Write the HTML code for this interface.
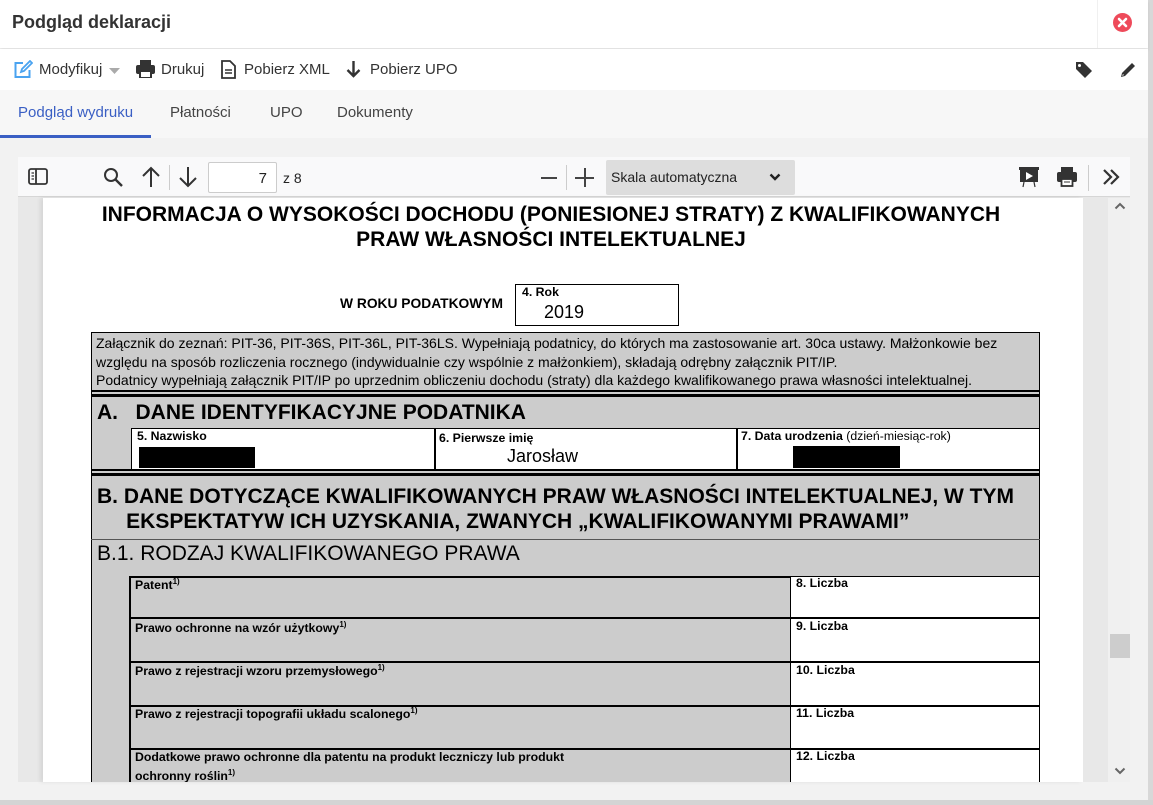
<!DOCTYPE html>
<html><head><meta charset="utf-8"><style>
*{box-sizing:border-box;margin:0;padding:0}
html,body{width:1153px;height:805px;overflow:hidden}
body{background:#f2f2f2;font-family:"Liberation Sans",sans-serif;position:relative}
.a{position:absolute}
.t{font-family:"Liberation Sans",sans-serif;color:#000;white-space:nowrap}
.b{font-weight:bold}
.gray{background:#cccccc}
.l{font-size:12.3px}
</style></head><body>
<div class="a" style="left:1148px;top:0;width:5px;height:805px;background:#d8d8d8"></div>
<div class="a" style="left:0;top:800px;width:1153px;height:5px;background:#d4d4d4"></div>
<div class="a" style="left:0;top:0;width:1148px;height:48px;background:#fff;box-shadow:0 2px 3px rgba(0,0,0,.08)"></div>
<div class="a" style="left:1097px;top:0;width:1px;height:48px;background:#f0f0f0"></div>
<div class="a t b" style="left:12px;top:12px;font-size:18px;color:#333">Podgląd deklaracji</div>
<svg class="a" style="left:1113px;top:13px" width="19" height="19" viewBox="0 0 19 19"><circle cx="9.5" cy="9.5" r="9.5" fill="#ee4a5a"/><path d="M6 6L13 13M13 6L6 13" stroke="#fff" stroke-width="2.6" stroke-linecap="round"/></svg>
<div class="a" style="left:0;top:49px;width:1148px;height:41px;background:#fff"></div>
<svg class="a" style="left:13px;top:60px" width="20" height="19" viewBox="0 0 20 19"><path d="M10 3H2.5v14h14V10" fill="none" stroke="#4aa3f0" stroke-width="2"/><path d="M8 12l1-3 8-8 2 2-8 8z" fill="none" stroke="#4aa3f0" stroke-width="1.8"/></svg>
<div class="a t" style="left:39px;top:61px;font-size:15px;color:#333">Modyfikuj</div>
<svg class="a" style="left:109px;top:68px" width="11" height="6"><path d="M0 0h11L5.5 6z" fill="#aaa"/></svg>
<svg class="a" style="left:136px;top:60px" width="19" height="18" viewBox="0 0 19 18"><rect x="4" y="0" width="11" height="5" fill="#333"/><rect x="0" y="5" width="19" height="9" rx="2" fill="#333"/><rect x="4" y="11" width="11" height="7" fill="#fff" stroke="#333" stroke-width="2"/></svg>
<div class="a t" style="left:161px;top:61px;font-size:15px;color:#333">Drukuj</div>
<svg class="a" style="left:221px;top:60px" width="15" height="19" viewBox="0 0 15 19"><path d="M1 1h8l5 5v12H1z" fill="none" stroke="#333" stroke-width="1.8"/><path d="M4 10h7M4 13h7" stroke="#333" stroke-width="1.6"/></svg>
<div class="a t" style="left:244px;top:61px;font-size:15px;color:#333">Pobierz XML</div>
<svg class="a" style="left:346px;top:60px" width="15" height="18" viewBox="0 0 15 18"><path d="M7.5 1v15M1.5 10l6 6 6-6" fill="none" stroke="#333" stroke-width="2.4"/></svg>
<div class="a t" style="left:370px;top:61px;font-size:15px;color:#333">Pobierz UPO</div>
<svg class="a" style="left:1075px;top:61px" width="18" height="18" viewBox="0 0 18 18"><path d="M1 1h7l9 9-7 7-9-9z" fill="#333"/><circle cx="4.5" cy="4.5" r="1.5" fill="#fff"/></svg>
<svg class="a" style="left:1120px;top:61px" width="17" height="17" viewBox="0 0 17 17"><path d="M1 16l1-4L12 2l3 3L5 15z" fill="#333"/><path d="M2.5 14.5l1-1" stroke="#fff"/></svg>
<div class="a" style="left:0;top:90px;width:1148px;height:48px;background:#f7f7f7"></div>
<div class="a t" style="left:18px;top:104px;font-size:15px;color:#3a5fc4">Podgląd wydruku</div>
<div class="a" style="left:0;top:135px;width:151px;height:3px;background:#3a5fc4"></div>
<div class="a t" style="left:170px;top:104px;font-size:15px;color:#444">Płatności</div>
<div class="a t" style="left:270px;top:104px;font-size:15px;color:#444">UPO</div>
<div class="a t" style="left:337px;top:104px;font-size:15px;color:#444">Dokumenty</div>
<div class="a" style="left:18px;top:157px;width:1112px;height:625px;background:#e8e8e8"></div>
<div class="a" style="left:18px;top:157px;width:1112px;height:40px;background:#f9f9fa;border-bottom:1px solid #d6d6d6"></div>
<svg class="a" style="left:28px;top:168px" width="20" height="17" viewBox="0 0 20 17"><rect x="1" y="1" width="18" height="15" rx="2" fill="none" stroke="#333" stroke-width="1.8"/><path d="M8 1v15" stroke="#333" stroke-width="1.8"/><path d="M3.5 5h2.5M3.5 8h2.5M3.5 11h2.5" stroke="#333" stroke-width="1.2"/></svg>
<svg class="a" style="left:103px;top:167px" width="20" height="20" viewBox="0 0 20 20"><circle cx="8" cy="8" r="6" fill="none" stroke="#333" stroke-width="2"/><path d="M12.5 12.5L19 19" stroke="#333" stroke-width="2.4"/></svg>
<svg class="a" style="left:141px;top:166px" width="20" height="22" viewBox="0 0 20 22"><path d="M10 21V2M2 10l8-8 8 8" fill="none" stroke="#333" stroke-width="2"/></svg>
<div class="a" style="left:169px;top:165px;width:1px;height:25px;background:#ccc"></div>
<svg class="a" style="left:178px;top:166px" width="20" height="22" viewBox="0 0 20 22"><path d="M10 1v19M2 12l8 8 8-8" fill="none" stroke="#333" stroke-width="2"/></svg>
<div class="a t" style="left:208px;top:162px;width:69px;height:31px;border:1px solid #ccc;border-radius:2px;background:#fff;text-align:right;padding:7px 9px 0 0;font-size:15px;color:#222">7</div>
<div class="a t" style="left:283px;top:170px;font-size:14px;color:#222">z 8</div>
<div class="a" style="left:541px;top:177px;width:16px;height:2px;background:#444"></div>
<div class="a" style="left:566px;top:165px;width:1px;height:25px;background:#ccc"></div>
<div class="a" style="left:575px;top:177px;width:19px;height:2px;background:#444"></div>
<div class="a" style="left:584px;top:168px;width:2px;height:19px;background:#444"></div>
<div class="a" style="left:606px;top:160px;width:189px;height:35px;background:#ddd;border-radius:2px"></div>
<div class="a t" style="left:611px;top:169px;font-size:14px;color:#222">Skala automatyczna</div>
<svg class="a" style="left:769px;top:173px" width="12" height="8" viewBox="0 0 12 8"><path d="M1.5 1.5l4.5 4.5 4.5-4.5" fill="none" stroke="#222" stroke-width="2.4"/></svg>
<svg class="a" style="left:1019px;top:166px" width="20" height="22" viewBox="0 0 20 22"><rect x="0" y="1" width="20" height="3" fill="#333"/><rect x="1" y="3" width="18" height="13" fill="#333"/><path d="M7 6l7 4-7 4z" fill="#fff"/><path d="M5 16l-1 5M15 16l1 5" stroke="#333" stroke-width="1.2"/></svg>
<svg class="a" style="left:1057px;top:167px" width="20" height="20" viewBox="0 0 20 20"><rect x="4" y="0" width="12" height="5" fill="#333"/><rect x="0" y="5" width="20" height="10" rx="2" fill="#333"/><rect x="4.5" y="12" width="11" height="7" fill="#fff" stroke="#333" stroke-width="1.8"/><path d="M7 15h6" stroke="#333"/></svg>
<div class="a" style="left:1088px;top:165px;width:1px;height:26px;background:#ccc"></div>
<svg class="a" style="left:1102px;top:168px" width="18" height="18" viewBox="0 0 18 18"><path d="M2 2l7 7-7 7M9 2l7 7-7 7" fill="none" stroke="#333" stroke-width="2.2"/></svg>
<div class="a" style="left:1108px;top:198px;width:22px;height:584px;background:#f0f0f0"></div>
<svg class="a" style="left:1114px;top:202px" width="12" height="8" viewBox="0 0 12 8"><path d="M1.5 6.5l4.5-4.5 4.5 4.5" fill="none" stroke="#666" stroke-width="2"/></svg>
<div class="a" style="left:1110px;top:634px;width:20px;height:24px;background:#cdcdcd"></div>
<svg class="a" style="left:1114px;top:767px" width="12" height="8" viewBox="0 0 12 8"><path d="M1.5 1.5l4.5 4.5 4.5-4.5" fill="none" stroke="#666" stroke-width="2"/></svg>
<div class="a" style="left:43px;top:198px;width:1040px;height:584px;background:#fff;overflow:hidden;box-shadow:-3px 0 4px rgba(0,0,0,.08)">
<div style="position:absolute;left:-43px;top:-198px;width:1153px;height:782px">
<div class="a t b" style="left:0;width:1102px;text-align:center;top:202px;font-size:21px;line-height:25px">INFORMACJA O WYSOKOŚCI DOCHODU (PONIESIONEJ STRATY) Z KWALIFIKOWANYCH<br>PRAW WŁASNOŚCI INTELEKTUALNEJ</div>
<div class="a t b" style="left:340px;top:296px;font-size:13.8px">W ROKU PODATKOWYM</div>
<div class="a" style="left:515px;top:284px;width:164px;height:42px;border:1.5px solid #000"></div>
<div class="a t b l" style="left:522px;top:285px">4. Rok</div>
<div class="a t" style="left:544px;top:302px;font-size:18px">2019</div>
<div class="a gray" style="left:91px;top:332px;width:949px;height:460px;border-left:1.5px solid #000;border-right:1.5px solid #000;border-top:1.5px solid #000"></div>
<div class="a t" style="left:96px;top:334px;font-size:14px;line-height:18.5px">Załącznik do zeznań: PIT-36, PIT-36S, PIT-36L, PIT-36LS. Wypełniają podatnicy, do których ma zastosowanie art. 30ca ustawy. Małżonkowie bez<br>względu na sposób rozliczenia rocznego (indywidualnie czy wspólnie z małżonkiem), składają odrębny załącznik PIT/IP.<br>Podatnicy wypełniają załącznik PIT/IP po uprzednim obliczeniu dochodu (straty) dla każdego kwalifikowanego prawa własności intelektualnej.</div>
<div class="a" style="left:91px;top:390px;width:949px;height:2px;background:#000"></div>
<div class="a" style="left:91px;top:394px;width:949px;height:3px;background:#000"></div>
<div class="a t b" style="left:97px;top:401px;font-size:21px">A.&nbsp;&nbsp; DANE IDENTYFIKACYJNE PODATNIKA</div>
<div class="a" style="left:131px;top:428px;width:909px;height:43px;background:#fff;border-top:1.5px solid #000;border-left:1.5px solid #000;border-right:1.5px solid #000"></div>
<div class="a" style="left:434px;top:428px;width:1.5px;height:43px;background:#000"></div>
<div class="a" style="left:736px;top:428px;width:1.5px;height:43px;background:#000"></div>
<div class="a t b l" style="left:137px;top:429px">5. Nazwisko</div>
<div class="a" style="left:139px;top:447px;width:116px;height:21px;background:#000"></div>
<div class="a t b l" style="left:439px;top:431px">6. Pierwsze imię</div>
<div class="a t" style="left:507px;top:446px;font-size:18px">Jarosław</div>
<div class="a t l" style="left:741px;top:429px"><b>7. Data urodzenia</b> (dzień-miesiąc-rok)</div>
<div class="a" style="left:793px;top:446px;width:107px;height:22px;background:#000"></div>
<div class="a" style="left:91px;top:469px;width:949px;height:2px;background:#000"></div>
<div class="a" style="left:91px;top:473px;width:949px;height:3px;background:#000"></div>
<div class="a t b" style="left:97px;top:484px;font-size:21px;line-height:25px">B. DANE DOTYCZĄCE KWALIFIKOWANYCH PRAW WŁASNOŚCI INTELEKTUALNEJ, W TYM<br>&nbsp;&nbsp;&nbsp;&nbsp; EKSPEKTATYW ICH UZYSKANIA, ZWANYCH „KWALIFIKOWANYMI PRAWAMI”</div>
<div class="a" style="left:91px;top:539px;width:949px;height:1px;background:#555"></div>
<div class="a t" style="left:97px;top:542px;font-size:21px">B.1. RODZAJ KWALIFIKOWANEGO PRAWA</div>
<div class="a" style="left:129px;top:576px;width:911px;height:1.5px;background:#000"></div>
<div class="a" style="left:129px;top:576px;width:1.5px;height:230px;background:#000"></div>
<div class="a" style="left:790px;top:577px;width:250px;height:230px;background:#fff;border-left:1.5px solid #000;border-right:1.5px solid #000"></div>
<div class="a" style="left:129px;top:617px;width:911px;height:1.5px;background:#000"></div>
<div class="a" style="left:129px;top:661px;width:911px;height:1.5px;background:#000"></div>
<div class="a" style="left:129px;top:705px;width:911px;height:1.5px;background:#000"></div>
<div class="a" style="left:129px;top:748px;width:911px;height:1.5px;background:#000"></div>
<div class="a t b l" style="left:135px;top:577px">Patent<sup style="font-size:8px">1)</sup></div>
<div class="a t b l" style="left:135px;top:620px">Prawo ochronne na wzór użytkowy<sup style="font-size:8px">1)</sup></div>
<div class="a t b l" style="left:135px;top:663px">Prawo z rejestracji wzoru przemysłowego<sup style="font-size:8px">1)</sup></div>
<div class="a t b l" style="left:135px;top:706px">Prawo z rejestracji topografii układu scalonego<sup style="font-size:8px">1)</sup></div>
<div class="a t b l" style="left:135px;top:750px;line-height:15px">Dodatkowe prawo ochronne dla patentu na produkt leczniczy lub produkt<br>ochronny roślin<sup style="font-size:8px">1)</sup></div>
<div class="a t b l" style="left:796px;top:576px">8. Liczba</div>
<div class="a t b l" style="left:796px;top:619px">9. Liczba</div>
<div class="a t b l" style="left:796px;top:663px">10. Liczba</div>
<div class="a t b l" style="left:796px;top:706px">11. Liczba</div>
<div class="a t b l" style="left:796px;top:749px">12. Liczba</div>
</div></div>
</body></html>
